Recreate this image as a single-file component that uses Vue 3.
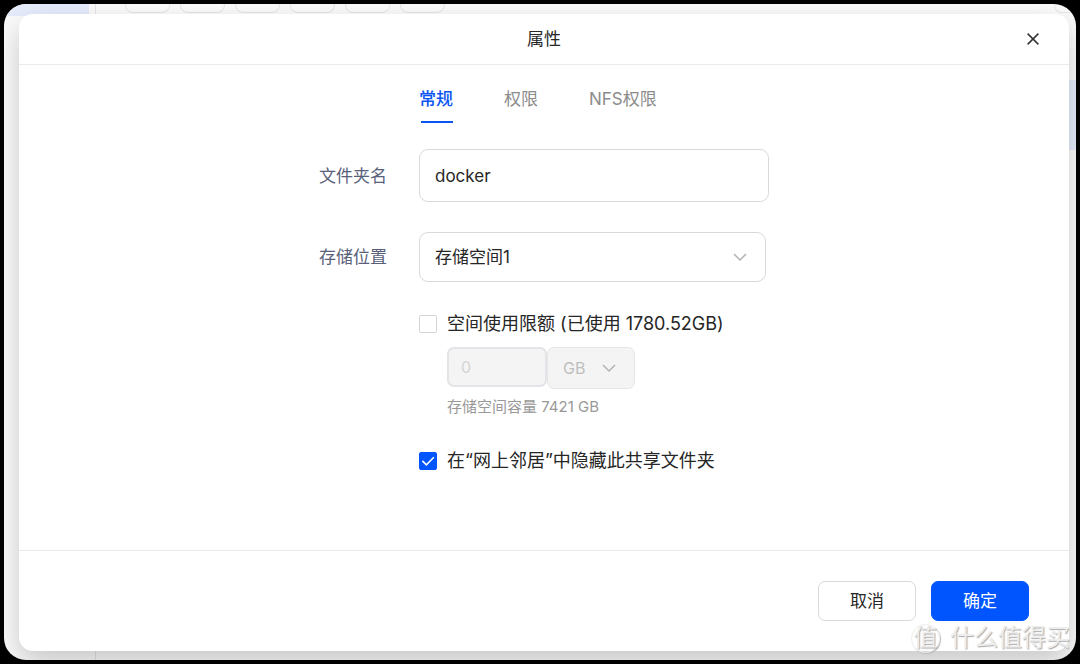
<template>
  <div class="desktop">
    <div class="window">
      <div class="backdrop" aria-hidden="true">
        <div class="side">
          <div class="side-item"></div>
        </div>
        <div class="list">
          <div class="toolbar">
            <span v-for="n in 6" :key="n" class="tool"></span>
            <span class="tool tool-last"></span>
          </div>
          <div class="selected-row"></div>
        </div>
      </div>

      <section class="dialog" role="dialog" aria-labelledby="dialog-title">
        <header class="dialog-header">
          <h1 id="dialog-title">属性</h1>
          <button class="close" type="button" aria-label="关闭">
            <svg width="12" height="12" viewBox="0 0 12 12">
              <path d="M0.6 0.6L11.4 11.4M11.4 0.6L0.6 11.4" />
            </svg>
          </button>
        </header>

        <form id="props" class="form" @submit.prevent>
          <nav class="tabs">
            <button
              v-for="tab in tabs"
              :key="tab"
              type="button"
              class="tab"
              :class="{ active: tab === activeTab }"
              @click="activeTab = tab"
            >{{ tab }}</button>
          </nav>

          <div class="row">
            <label for="folder">文件夹名</label>
            <input id="folder" v-model="folder" class="field" type="text" />
          </div>

          <div class="row">
            <label for="location">存储位置</label>
            <div class="select-box location">
              <select id="location" v-model="location" class="field">
                <option>存储空间1</option>
              </select>
              <svg class="arrow" width="14" height="8" viewBox="0 0 14 8">
                <path d="M1 1L7 7L13 1" />
              </svg>
            </div>
          </div>

          <div class="check-row">
            <span class="check">
              <input id="quota" v-model="quotaOn" type="checkbox" />
              <svg viewBox="0 0 17 17"><path d="M3.2 8.4L7 12.2L14 5" /></svg>
            </span>
            <label for="quota">空间使用限额 (已使用 1780.52GB)</label>
          </div>

          <div class="quota">
            <input v-model="quota" class="field quota-size" type="text" aria-label="限额" :disabled="!quotaOn" />
            <div class="select-box unit">
              <select v-model="unit" class="field" aria-label="单位" :disabled="!quotaOn">
                <option>GB</option>
                <option>TB</option>
              </select>
              <svg class="arrow" width="14" height="8" viewBox="0 0 14 8">
                <path d="M1 1L7 7L13 1" />
              </svg>
            </div>
          </div>
          <p class="hint">存储空间容量 7421 GB</p>

          <div class="check-row">
            <span class="check">
              <input id="hidden" v-model="hidden" type="checkbox" />
              <svg viewBox="0 0 17 17"><path d="M3.2 8.4L7 12.2L14 5" /></svg>
            </span>
            <label for="hidden">在“网上邻居”中隐藏此共享文件夹</label>
          </div>
        </form>

        <footer class="dialog-footer">
          <button class="btn" type="button">取消</button>
          <button class="btn btn-primary" type="submit" form="props">确定</button>
        </footer>
      </section>
    </div>

    <div class="watermark">
      <span class="mark">值</span>
      <span>什么值得买</span>
    </div>
  </div>
</template>

<script setup>
import { ref } from 'vue';

const tabs = ['常规', '权限', 'NFS权限'];
const activeTab = ref('常规');

const folder = ref('docker');
const location = ref('存储空间1');
const quotaOn = ref(false);
const quota = ref('0');
const unit = ref('GB');
const hidden = ref(true);
</script>

<style>
body {
  background: #000;
}
</style>

<style scoped>
* {
  box-sizing: border-box;
}

.desktop {
  position: relative;
  display: flex;
  min-height: 100vh;
  padding: 4px;
  font-family: Inter, "Noto Sans CJK SC", sans-serif;
  font-size: 17px;
  line-height: 24px;
  color: #262626;
}

button,
input,
select {
  margin: 0;
  font: inherit;
  color: inherit;
}

.window {
  position: relative;
  flex: 1;
  display: flex;
  padding: 10px 7px 9px 15px;
  border-radius: 22px;
  background: #fafafa;
  overflow: hidden;
}

/* file manager behind the dialog */
.backdrop {
  position: absolute;
  inset: 0;
  display: flex;
}

.side {
  width: 92px;
  border-right: 1px solid #e4e4e4;
}

.side-item {
  width: 85px;
  height: 12px;
  background: #e6ebfb;
}

.list {
  flex: 1;
}

.toolbar {
  display: flex;
  gap: 10px;
  height: 76px;
  padding-left: 29px;
}

.tool {
  width: 45px;
  height: 9px;
  border: 1px solid #e6e6e6;
  border-top: none;
  border-radius: 0 0 8px 8px;
}

.tool-last {
  margin-left: auto;
  width: 22px;
}

.selected-row {
  height: 70px;
  background: #e3eafa;
}

.dialog {
  position: relative;
  flex: 1;
  display: flex;
  flex-direction: column;
  border-radius: 14px;
  background: #fff;
  box-shadow: 0 12px 28px rgba(0, 0, 0, 0.2);
}

.dialog-header {
  display: grid;
  grid-template-columns: 1fr auto 1fr;
  align-items: center;
  height: 51px;
  padding: 0 30px;
  border-bottom: 1px solid #ebebeb;
}

.dialog-header h1 {
  grid-column: 2;
  margin: 0;
  font-size: 17px;
  font-weight: 400;
}

.close {
  justify-self: end;
  display: flex;
  padding: 0;
  border: none;
  background: none;
}

svg {
  fill: none;
  stroke: #333;
  stroke-width: 1.5;
}

.form {
  flex: 1;
  width: 450px;
  margin: 0 auto;
}

.tabs {
  display: flex;
  gap: 51px;
  margin: 22px 0 26px 100px;
}

.tab {
  position: relative;
  height: 36px;
  padding: 0 0 12px;
  border: none;
  background: none;
  color: #8c8c8c;
}

.tab.active {
  color: #0a55f0;
  font-weight: 500;
}

.tab.active::after {
  content: "";
  position: absolute;
  left: 2px;
  right: 0;
  bottom: 0;
  height: 2px;
  background: #0a55f0;
}

.row {
  display: grid;
  grid-template-columns: 100px 1fr;
  align-items: center;
  margin-bottom: 30px;
}

.row label {
  color: #59617a;
}

.field {
  width: 100%;
  height: 53px;
  padding: 0 15px;
  border: 1px solid #d9d9d9;
  border-radius: 9px;
  background: #fff;
  outline: none;
  appearance: none;
}

.select-box {
  position: relative;
}

.location {
  width: 347px;
}

.location .field {
  height: 50px;
}

.arrow {
  position: absolute;
  top: 50%;
  right: 19px;
  transform: translateY(-50%);
  stroke: #b3b3b3;
  pointer-events: none;
}

.check-row {
  display: flex;
  align-items: center;
  gap: 10px;
  padding-left: 100px;
  font-size: 18px;
}

.check {
  position: relative;
  display: flex;
}

.check input {
  width: 18px;
  height: 18px;
  border: 1px solid #d4d4d4;
  border-radius: 2px;
  background: #fff;
  appearance: none;
}

.check input:checked {
  border-color: #0055ff;
  background: #0055ff;
}

.check svg {
  position: absolute;
  inset: 0;
  stroke: #fff;
  pointer-events: none;
}

.quota {
  display: flex;
  align-items: flex-start;
  margin: 11px 0 6px 128px;
}

.quota .field {
  height: 42px;
  border-color: #e6e6e6;
  border-radius: 7px;
  font-size: 16px;
}

.quota .field:disabled {
  background: #f4f4f4;
  color: #bfbfbf;
  opacity: 1;
}

.quota .quota-size {
  width: 100px;
  height: 40px;
  padding: 0 12px;
  border: 2px solid #e2e4e7;
}

.quota .quota-size:disabled {
  color: #d4d4d4;
}

.unit {
  width: 88px;
}

.hint {
  margin: 0 0 30px 128px;
  font-size: 15px;
  color: #999;
}

.dialog-footer {
  display: flex;
  justify-content: flex-end;
  gap: 15px;
  height: 101px;
  padding: 30px 40px 0;
  border-top: 1px solid #ebebeb;
}

.btn {
  width: 98px;
  height: 40px;
  padding: 0;
  border: 1px solid #d9d9d9;
  border-radius: 7px;
  background: #fff;
}

.btn-primary {
  border-color: #0055ff;
  background: #0055ff;
  color: #fff;
}

.watermark {
  position: absolute;
  right: 10px;
  bottom: 11px;
  display: flex;
  align-items: center;
  gap: 10px;
  font-size: 24px;
  line-height: 30px;
  color: #ededed;
  text-shadow: 1px 1px 1px #aaa;
  white-space: nowrap;
  pointer-events: none;
}

.mark {
  width: 29px;
  height: 29px;
  line-height: 26px;
  text-align: center;
  border: 1px solid #ededed;
  border-radius: 50%;
  box-shadow: 1px 1px 1px #bbb;
}
</style>
